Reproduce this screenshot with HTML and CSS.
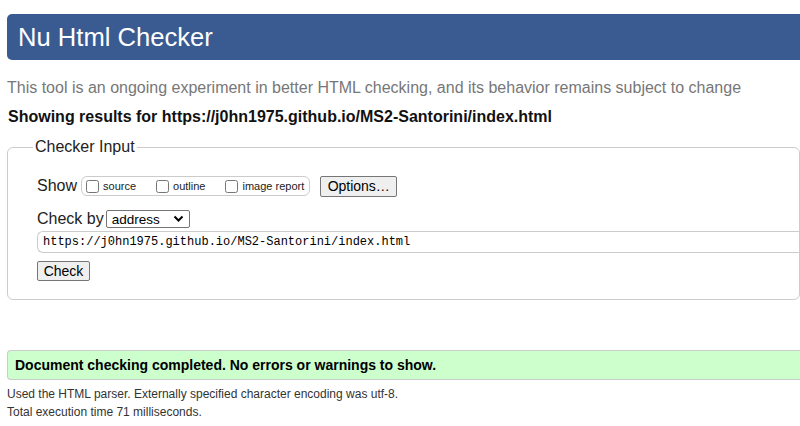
FILE: index.html
```html
<!DOCTYPE html>
<html>
<head>
<meta charset="utf-8">
<link rel="stylesheet" href="styles.css">
</head>
<body>
<div class="page">
  <h1 class="header">Nu Html Checker</h1>
  <p class="tagline">This tool is an ongoing experiment in better HTML checking, and its behavior remains subject to change</p>
  <p class="showing">Showing results for https://j0hn1975.github.io/MS2-Santorini/index.html</p>
  <fieldset class="input">
    <legend>Checker Input</legend>
    <div class="row show-row">
      <span class="lbl">Show</span>
      <span class="group">
        <label><input type="checkbox">source</label>
        <label><input type="checkbox">outline</label>
        <label><input type="checkbox">image report</label>
      </span>
      <button class="btn">Options…</button>
    </div>
    <div class="row by-row">
      <span class="lbl">Check by</span>
      <span class="select"><span>address</span><svg width="11" height="8" viewBox="0 0 11 8"><path d="M1.5 1.5 L5.5 5.5 L9.5 1.5" fill="none" stroke="#000" stroke-width="2"/></svg></span>
    </div>
    <div class="url">https://j0hn1975.github.io/MS2-Santorini/index.html</div>
    <div class="row"><button class="btn check">Check</button></div>
  </fieldset>
  <div class="success">Document checking completed. No errors or warnings to show.</div>
  <p class="details">Used the HTML parser. Externally specified character encoding was utf-8.</p>
  <p class="details">Total execution time 71 milliseconds.</p>
</div>
</body>
</html>
```
FILE: styles.css
```css
html, body { margin: 0; padding: 0; background: #fff; }
body { font-family: "Liberation Sans", Arial, sans-serif; color: #222; overflow: hidden; }
.page { padding: 14px 0 0 7px; }
.page > * { margin-right: -40px; }
.header {
  margin: 0;
  height: 46px;
  box-sizing: border-box;
  background: #3a5b92;
  color: #fff;
  font-weight: normal;
  font-size: 25.6px;
  line-height: 46px;
  padding-left: 11px;
  border-radius: 5px 0 0 5px;
}
.tagline { margin: 18px 0 0 0; font-size: 16px; line-height: 20px; color: #777; }
.showing { margin: 9px 0 0 1px; font-size: 16px; line-height: 20px; font-weight: bold; color: #111; }
.input {
  margin: 10px 0 0 0;
  border: 1px solid #ccc;
  border-radius: 6px;
  padding: 6px 0 18px 29px;
  min-inline-size: 0;
}
.input legend { font-size: 16px; padding: 0 2px; margin-left: -4px; color: #222; line-height: 20px; }
.row { display: flex; align-items: center; }
.lbl { font-size: 16px; color: #222; }
.show-row { margin-top: 12px; height: 22px; }
.group {
  display: flex; align-items: center;
  margin-left: 4px;
  height: 18px;
  border: 1px solid #ccc;
  border-radius: 6px;
  padding: 0 5px 0 4px;
  font-size: 11px;
  gap: 20px;
}
.group label { display: flex; align-items: center; }
.group input { margin: 0 4px 0 0; width: 13px; height: 13px; }
.btn {
  font-family: "Liberation Sans", Arial, sans-serif;
  font-size: 14px;
  background: #efefef;
  border: 1px solid #767676;
  border-radius: 2px;
  color: #000;
  padding: 0;
  text-align: center;
  height: 21px;
  line-height: 19px;
}
.show-row .btn { margin-left: 10px; width: 77px; }
.by-row { margin-top: 12px; height: 20px; }
.select {
  display: flex; align-items: center; justify-content: space-between;
  margin-left: 2px;
  width: 84px; height: 18px; box-sizing: border-box;
  border: 1px solid #767676;
  border-radius: 2px;
  padding: 0 5px 0 5px;
  font-size: 13.5px;
  color: #000;
}
.url {
  margin-top: 2px;
  height: 22px; box-sizing: border-box;
  border: 1px solid #ccc;
  border-radius: 6px 0 0 6px;
  border-right: none;
  font-family: "Liberation Mono", "DejaVu Sans Mono", monospace;
  font-size: 12px;
  line-height: 20px;
  padding-left: 5px;
  color: #000;
}
.btn.check { margin-top: 8px; width: 53px; height: 20px; }
.success {
  margin-top: 50px;
  height: 30px; box-sizing: border-box;
  background: #ccffcc;
  border: 1px solid #ccc;
  border-right: none;
  border-radius: 4px 0 0 4px;
  font-weight: bold;
  font-size: 14px;
  line-height: 28px;
  padding-left: 7px;
  color: #000;
}
.details { margin: 0; font-size: 12px; line-height: 18px; color: #333; }
.success + .details { margin-top: 5px; }
```
